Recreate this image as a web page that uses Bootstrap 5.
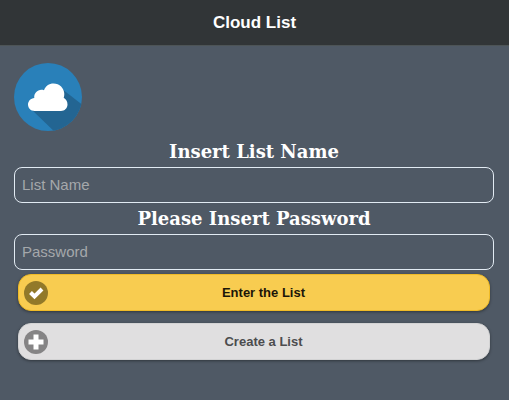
<!DOCTYPE html>
<html lang="en">
<head>
<meta charset="utf-8">
<meta name="viewport" content="width=device-width, initial-scale=1">
<title>Cloud List</title>
<link href="https://cdn.jsdelivr.net/npm/bootstrap@5.3.0/dist/css/bootstrap.min.css" rel="stylesheet">
<style>
body { background: #4f5965; color: #fff; font-family: "Liberation Sans", Arial, sans-serif; }
.top-bar { background: #313537; border-bottom: 1px solid #4d5456; height: 46px; }
.top-bar h1 { font-size: 17px; line-height: 20px; }
.page-main { padding: 17px 15px 17px 14px; }
.logo { width: 68px; height: 68px; margin-bottom: 5px; }
.field-label { font: bold 18px/31px "DejaVu Serif", serif; }
.form-control.field {
  background: transparent; border: 1px solid #e2ebf3; border-radius: 8px;
  color: #fff; font-size: 15px; line-height: 20px; padding: 6px 7px 8px; height: 36px;
}
.field::placeholder { color: #a5a8ab; }
.actions { padding: 4px 4px; gap: 12px; }
.action { border-radius: 13px; border: 1px solid; height: 37px; padding: 0 5px; font-size: 13px; line-height: 20px; font-weight: 700; box-shadow: 0 1px 3px rgba(0,0,0,.4); }
.action svg { width: 24px; height: 24px; }
.action-label { padding-right: 5px; }
.enter, .enter:hover { background: #f8cc50; border-color: #f0bb27; color: #1c1608; }
.create, .create:hover { background: #e0dfe0; border-color: #d3d3d4; color: #4c4c4e; }
</style>
</head>
<body>
<header class="top-bar d-flex align-items-center justify-content-center">
  <h1 class="fw-bold m-0">Cloud List</h1>
</header>
<main class="page-main">
  <svg class="logo d-block" viewBox="0 0 68 68" role="img" aria-label="Cloud">
    <defs><clipPath id="disc"><circle cx="34" cy="34" r="34"/></clipPath></defs>
    <circle cx="34" cy="34" r="34" fill="#2980b9"/>
    <path clip-path="url(#disc)" fill="#236592" d="M48 26L74 46V74H46L17 46Z"/>
    <path fill="#fff" d="M20.500 48C16.800 48 14 45.100 14 41.500C14 38.200 16.800 35.300 20.300 35C19.500 29.500 25 25.200 30 27.200C31.500 23 35 20.500 39.500 20.500C45.500 20.500 50.300 25.200 50.300 31C50.300 32.300 50.100 33.600 49.700 34.800C52 36.100 53.500 38.600 53.500 41.500C53.500 45.100 50.600 48 47 48Z"/>
  </svg>
  <form>
    <label class="field-label d-block text-center" for="list-name">Insert List Name</label>
    <input class="form-control field" id="list-name" type="text" placeholder="List Name">
    <label class="field-label d-block text-center" for="list-password">Please Insert Password</label>
    <input class="form-control field" id="list-password" type="password" placeholder="Password">
    <div class="actions d-grid">
      <button class="btn action enter d-flex align-items-center" type="button">
        <svg viewBox="0 0 24 24" aria-hidden="true"><circle cx="12" cy="12" r="12" fill="#927929"/><path d="M6.500 11.500L10.500 15.500L18 8" fill="none" stroke="#fff" stroke-width="4"/></svg>
        <span class="action-label flex-grow-1">Enter the List</span>
      </button>
      <button class="btn action create d-flex align-items-center" type="button">
        <svg viewBox="0 0 24 24" aria-hidden="true"><circle cx="12" cy="12" r="12" fill="#858485"/><path d="M12 4.500V19.500M4.500 12H19.500" fill="none" stroke="#fff" stroke-width="5"/></svg>
        <span class="action-label flex-grow-1">Create a List</span>
      </button>
    </div>
  </form>
</main>
<script src="https://cdn.jsdelivr.net/npm/bootstrap@5.3.0/dist/js/bootstrap.bundle.min.js"></script>
</body>
</html>
